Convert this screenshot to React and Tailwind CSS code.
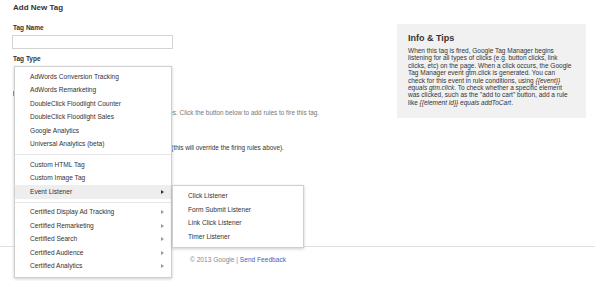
import React from 'react';

const FONT = { fontFamily: '"Liberation Sans", Arial, sans-serif' };

// --- ITENS DO MENU ---
const GROUPS = [
    [
        { label: 'AdWords Conversion Tracking' },
        { label: 'AdWords Remarketing' },
        { label: 'DoubleClick Floodlight Counter' },
        { label: 'DoubleClick Floodlight Sales' },
        { label: 'Google Analytics' },
        { label: 'Universal Analytics (beta)' },
    ],
    [
        { label: 'Custom HTML Tag' },
        { label: 'Custom Image Tag' },
        { label: 'Event Listener', sub: true, active: true },
    ],
    [
        { label: 'Certified Display Ad Tracking', sub: true },
        { label: 'Certified Remarketing', sub: true },
        { label: 'Certified Search', sub: true },
        { label: 'Certified Audience', sub: true },
        { label: 'Certified Analytics', sub: true },
    ],
];

const LISTENERS = ['Click Listener', 'Form Submit Listener', 'Link Click Listener', 'Timer Listener'];

const Arrow = ({ dark }) => (
    <svg width="3" height="4" viewBox="0 0 3 4" className={dark ? 'text-[#333]' : 'text-[#999]'}>
        <path d="M0 0 L3 2 L0 4 Z" fill="currentColor" />
    </svg>
);

const MenuItem = ({ item }) => (
    <div className={`flex items-center h-[13.5px] pl-[15px] pr-[7px] text-[6.6px] text-[#333] whitespace-nowrap ${item.active ? 'bg-[#eeeeee]' : ''}`}>
        <span className="flex-1">{item.label}</span>
        {item.sub && <Arrow dark={item.active} />}
    </div>
);

export default function App() {
    return (
        <div className="relative w-[595px] h-[281px] bg-white overflow-hidden" style={FONT}>
            <div className="flex">
                {/* COLUNA ESQUERDA */}
                <div className="w-[384px] pl-[13px]">
                    <h1 className="mt-[3px] text-[8px] leading-[9px] font-bold text-[#333]">Add New Tag</h1>
                    <div className="mt-[12px] text-[6.5px] leading-[8px] font-bold text-[#333]">Tag Name</div>
                    <div className="mt-[2.5px] w-[161px] h-[14.5px] border border-[#d4d4d4] -ml-px"></div>
                    <div className="mt-[6px] text-[6.5px] leading-[8px] font-bold text-[#333]">Tag Type</div>
                    <div className="mt-[27px] text-[6.5px] leading-[8px] font-bold text-[#333]">Firing Rules</div>
                    <p className="mt-[11px] pl-[55px] text-[6.4px] leading-[8px] text-[#777] whitespace-nowrap">
                        This tag does not have any firing rules. Click the button below to add rules to fire this tag.
                    </p>
                    <p className="mt-[27px] pl-[29px] text-[6.4px] leading-[8px] text-[#333] whitespace-nowrap">
                        Add blocking rules to keep this tag from firing (this will override the firing rules above).
                    </p>
                </div>

                {/* INFO & TIPS */}
                <div className="mt-[24px] ml-[13px] w-[189px] h-[94px] bg-[#f1f1f1] pl-[11px] pt-[9px] text-[#333]">
                    <div className="text-[9px] leading-[10px] font-bold">Info &amp; Tips</div>
                    <div className="mt-[4px] text-[6.5px] leading-[7.4px] whitespace-nowrap">
                        <div>When this tag is fired, Google Tag Manager begins</div>
                        <div>listening for all types of clicks (e.g. button clicks, link</div>
                        <div>clicks, etc) on the page. When a click occurs, the Google</div>
                        <div>Tag Manager event gtm.click is generated. You can</div>
                        <div>check for this event in rule conditions, using <i>{'{{event}}'}</i></div>
                        <div><i>equals gtm.click</i>. To check whether a specific element</div>
                        <div>was clicked, such as the "add to cart" button, add a rule</div>
                        <div>like <i>{'{{element id}}'} equals addToCart</i>.</div>
                    </div>
                </div>
            </div>

            <div className="absolute left-0 right-0 top-[246px] border-t border-[#e0e0e0]"></div>
            <div className="absolute left-[190px] top-[256px] text-[6.6px] leading-[8px] text-[#888] whitespace-nowrap">
                © 2013 Google | <span className="text-[#3a66c4]">Send Feedback</span>
            </div>

            {/* MENU SUSPENSO */}
            <div className="absolute left-[14px] top-[66px] w-[158px] bg-white border border-[#cfcfcf] shadow-[0_1px_3px_rgba(0,0,0,0.2)] pt-[3px] pb-[4px]">
                {GROUPS.map((group, gi) => (
                    <div key={gi}>
                        {gi > 0 && <div className="my-[3px] h-px bg-[#e5e5e5]"></div>}
                        {group.map((item) => <MenuItem key={item.label} item={item} />)}
                    </div>
                ))}
            </div>

            {/* SUBMENU */}
            <div className="absolute left-[172px] top-[185px] w-[132px] bg-white border border-[#cfcfcf] shadow-[0_1px_3px_rgba(0,0,0,0.2)] pt-[3.5px] pb-[3px]">
                {LISTENERS.map((label) => <MenuItem key={label} item={{ label }} />)}
            </div>
        </div>
    );
}
